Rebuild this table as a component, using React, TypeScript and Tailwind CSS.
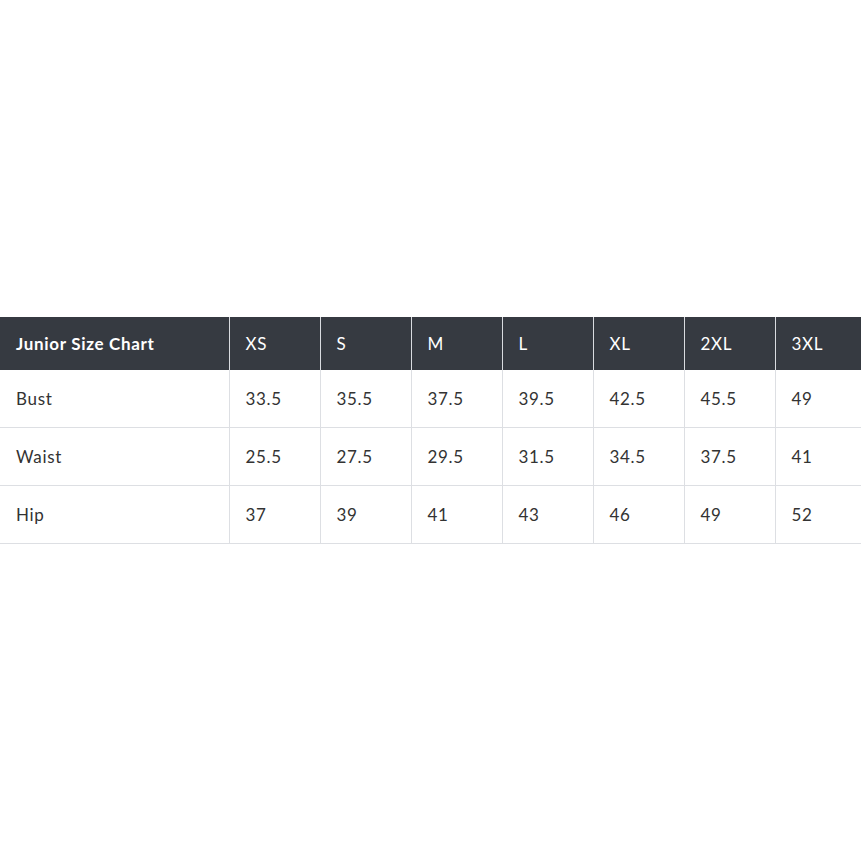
const sizes = ['XS', 'S', 'M', 'L', 'XL', '2XL', '3XL']

const rows = [
  { label: 'Bust', values: ['33.5', '35.5', '37.5', '39.5', '42.5', '45.5', '49'] },
  { label: 'Waist', values: ['25.5', '27.5', '29.5', '31.5', '34.5', '37.5', '41'] },
  { label: 'Hip', values: ['37', '39', '41', '43', '46', '49', '52'] },
]

export default function App() {
  return (
    <div className="min-h-screen flex items-center bg-white" style={{ fontFamily: 'Lato, "Noto Sans", sans-serif' }}>
      <table className="w-full border-collapse table-fixed text-[17px] tracking-[0.04em]">
        <colgroup>
          <col className="w-[229px]" />
          {sizes.slice(0, 6).map(s => <col key={s} className="w-[91px]" />)}
          <col />
        </colgroup>
        <thead>
          <tr className="bg-[#363a41] text-white h-[53px]">
            <th className="text-left font-bold px-4">Junior Size Chart</th>
            {sizes.map(s => (
              <th key={s} className="text-left font-normal px-4 border-l border-[#d9dbe0]">{s}</th>
            ))}
          </tr>
        </thead>
        <tbody>
          {rows.map(r => (
            <tr key={r.label} className="h-[58px] border-b border-[#dddfe3] text-[#333333]">
              <td className="px-4">{r.label}</td>
              {r.values.map((v, i) => (
                <td key={i} className="px-4 border-l border-[#dddfe3]">{v}</td>
              ))}
            </tr>
          ))}
        </tbody>
      </table>
    </div>
  )
}
